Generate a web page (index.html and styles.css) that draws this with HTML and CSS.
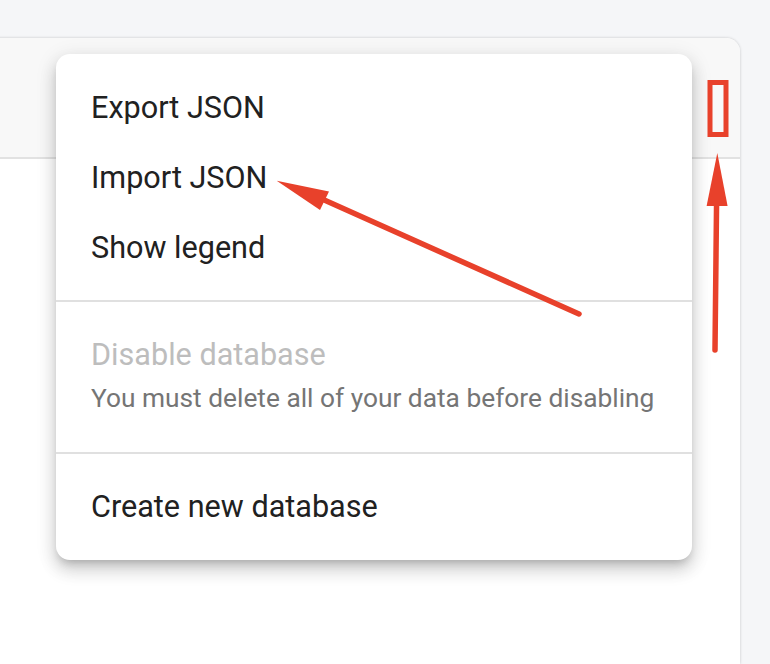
FILE: index.html
```html
<!DOCTYPE html>
<html>
<head>
<meta charset="utf-8">
<link rel="stylesheet" href="styles.css">
</head>
<body>
<div class="page">
  <div class="card">
    <div class="card-header"></div>
    <div class="card-body"></div>
  </div>

  <div class="menu">
    <div class="menu-section first">
      <div class="menu-item">Export JSON</div>
      <div class="menu-item">Import JSON</div>
      <div class="menu-item">Show legend</div>
    </div>
    <div class="menu-section disabled">
      <div class="menu-title">Disable database</div>
      <div class="menu-sub">You must delete all of your data before disabling</div>
    </div>
    <div class="menu-section last">
      <div class="menu-item">Create new database</div>
    </div>
  </div>

  <svg class="annotations" width="770" height="664" viewBox="0 0 770 664">
    <rect x="710" y="82.5" width="16" height="52" fill="none" stroke="#e8412b" stroke-width="5"/>
    <line x1="715" y1="350" x2="716.6" y2="200" stroke="#e8412b" stroke-width="5.5" stroke-linecap="round"/>
    <polygon points="717.3,153 727.6,206 706.6,206" fill="#e8412b"/>
    <line x1="579" y1="314" x2="322" y2="199" stroke="#e8412b" stroke-width="5.5" stroke-linecap="round"/>
    <polygon points="276.7,180.7 329,191.5 320,210" fill="#e8412b"/>
  </svg>
</div>
</body>
</html>
```

FILE: styles.css
```css
html, body {
  margin: 0;
  padding: 0;
}
body {
  background: #f5f6f8;
  font-family: Roboto, "Liberation Sans", sans-serif;
  width: 770px;
  height: 664px;
  overflow: hidden;
}
.page {
  position: relative;
  width: 770px;
  height: 664px;
  padding-top: 38px;
  box-sizing: border-box;
  overflow: hidden;
}
.card {
  margin-left: -20px;
  width: 760px;
  height: 626px;
  background: #ffffff;
  border-radius: 0 14px 0 0;
  box-shadow: 0 0 3px rgba(0, 0, 0, 0.2);
  overflow: hidden;
}
.card-header {
  height: 119px;
  background: #f8f8f8;
  border-bottom: 2px solid #e2e2e2;
}
.menu {
  position: absolute;
  left: 56px;
  top: 54px;
  width: 636px;
  background: #ffffff;
  border-radius: 14px;
  box-shadow: 0 6px 8px -4px rgba(0,0,0,0.22), 0 10px 16px 2px rgba(0,0,0,0.12), 0 4px 20px 3px rgba(0,0,0,0.08);
}
.menu-section {
  border-bottom: 2px solid #e0e0e0;
}
.menu-section.first {
  padding: 19px 0 17px;
}
.menu-section.disabled {
  padding: 35px 0 36px;
}
.menu-section.last {
  border-bottom: none;
  padding: 18px 0 18px;
}
.menu-item {
  height: 70px;
  line-height: 70px;
  padding-left: 35px;
  font-size: 30.6px;
  color: #212121;
  white-space: nowrap;
}
.menu-title {
  line-height: 36px;
  padding-left: 35px;
  font-size: 30.6px;
  color: #bdbdbd;
}
.menu-sub {
  margin-top: 7px;
  line-height: 36px;
  padding-left: 35px;
  font-size: 26.3px;
  color: #757575;
  white-space: nowrap;
}
.annotations {
  position: absolute;
  left: 0;
  top: 0;
}
```
